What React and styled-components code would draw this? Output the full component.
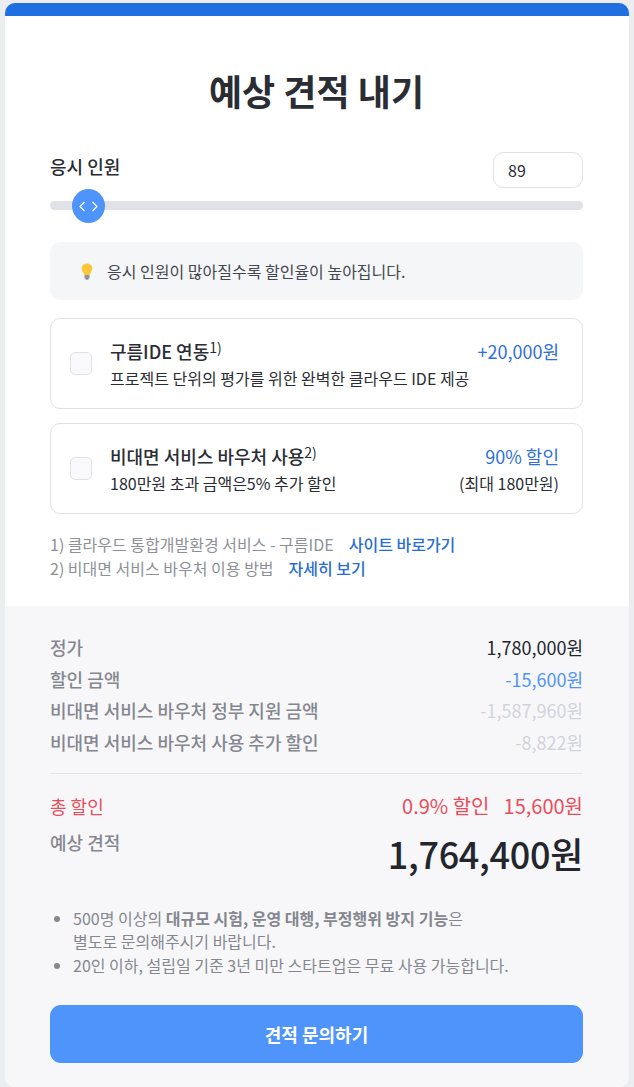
import styled, { createGlobalStyle } from "styled-components";

const GlobalStyle = createGlobalStyle`
  html, body {
    margin: 0;
    padding: 0;
    background: #ecedf1;
  }
  * {
    box-sizing: border-box;
  }
  body {
    font-family: "Noto Sans CJK KR", "Noto Sans", sans-serif;
    color: #2a2d34;
  }
`;

const headcount = 89;
const thumbLeft = 22;

const Card = styled.div`
  margin: 3px 5px 0;
  height: 1084px;
  background: #fff;
  border-top: 13px solid #1f6fe0;
  border-radius: 10px;
  overflow: hidden;
  display: flex;
  flex-direction: column;
`;

const Top = styled.div`
  padding: 48px 46px 0 45px;
  height: 590px;
`;

const Title = styled.h1`
  margin: 0;
  height: 52px;
  text-align: center;
  font-size: 36px;
  line-height: 52px;
  font-weight: 700;
  color: #2a2d34;
`;

const LabelRow = styled.div`
  margin-top: 36px;
  display: flex;
  justify-content: space-between;
  align-items: flex-start;
`;

const Label = styled.div`
  font-size: 18px;
  line-height: 28px;
  font-weight: 500;
  color: #2a2d34;
`;

const CountInput = styled.input`
  width: 90px;
  height: 36px;
  padding: 0 14px;
  border: 1px solid #e1e1e8;
  border-radius: 10px;
  font-family: inherit;
  font-size: 16px;
  color: #2a2d34;
  outline: none;
`;

const Track = styled.div`
  position: relative;
  margin-top: 13px;
  height: 9px;
  border-radius: 5px;
  background: #e1e1e8;
`;

const Thumb = styled.div`
  position: absolute;
  top: -12px;
  width: 33px;
  height: 34px;
  border-radius: 50%;
  background: #4e94fb;
  display: flex;
  align-items: center;
  justify-content: center;
`;

const Tip = styled.div`
  margin-top: 32px;
  height: 58px;
  padding: 0 30px;
  background: #f5f6f8;
  border-radius: 10px;
  display: flex;
  align-items: center;
  gap: 13px;
  font-size: 16px;
  color: #44474f;
`;

const Options = styled.div`
  margin-top: 18px;
  display: flex;
  flex-direction: column;
  gap: 14px;
`;

const Option = styled.div`
  height: 91px;
  padding: 0 23px 0 19px;
  border: 1px solid #e1e1e8;
  border-radius: 10px;
  display: flex;
  align-items: center;
`;

const Check = styled.span`
  flex: none;
  width: 22px;
  height: 23px;
  margin-right: 18px;
  border: 1px solid #e1e1e8;
  border-radius: 5px;
  background: #f9f9fb;
`;

const OptionBody = styled.div`
  flex: 1;
  min-width: 0;
`;

const OptionTitle = styled.div`
  font-size: 18px;
  line-height: 26px;
  font-weight: 500;
  color: #2a2d34;
  sup {
    font-size: 14px;
    font-weight: 400;
    line-height: 0;
    vertical-align: 6px;
  }
`;

const OptionText = styled.div`
  margin-top: 2px;
  font-size: 16px;
  line-height: 24px;
  color: #2a2d34;
`;

const OptionPrices = styled.div`
  text-align: right;
  align-self: center;
`;

const OptionPrice = styled.div`
  font-size: 18px;
  line-height: 26px;
  color: #2f6fd6;
`;

const Notes = styled.div`
  margin-top: 18px;
  font-size: 16px;
  line-height: 24px;
  color: #8e9098;
`;

const NoteLink = styled.a`
  margin-left: 15px;
  font-weight: 500;
  color: #2a6fd0;
`;

const Summary = styled.div`
  flex: 1;
  background: #f7f7fa;
  padding: 25px 46px 0 45px;
`;

const PriceRow = styled.div`
  height: 31.7px;
  display: flex;
  justify-content: space-between;
  align-items: center;
  font-size: 18px;
  font-weight: 500;
  color: #85878f;
`;

const PriceValue = styled.span`
  font-weight: 400;
  color: ${(props) => props.$color};
`;

const Divider = styled.hr`
  margin: 15px 0 0;
  border: 0;
  border-top: 1px solid #e4e4ea;
`;

const DiscountRow = styled.div`
  margin-top: 19px;
  display: flex;
  justify-content: space-between;
  font-size: 18px;
  line-height: 26px;
  color: #ea4d59;
`;

const DiscountValue = styled.span`
  font-size: 20px;
  span {
    margin-left: 14px;
  }
`;

const TotalRow = styled.div`
  margin-top: 7px;
  display: flex;
  justify-content: space-between;
  align-items: flex-start;
`;

const TotalLabel = styled.span`
  margin-top: 3px;
  font-size: 18px;
  line-height: 26px;
  font-weight: 500;
  color: #85878f;
`;

const TotalValue = styled.span`
  font-size: 36px;
  line-height: 54px;
  font-weight: 500;
  letter-spacing: -0.3px;
  color: #23262c;
`;

const Bullets = styled.ul`
  margin: 27px 0 0;
  padding: 0 0 0 23px;
  font-size: 16px;
  line-height: 23.5px;
  color: #85878f;
  b {
    font-weight: 700;
  }
`;

const Submit = styled.button`
  display: block;
  width: 100%;
  height: 58px;
  margin-top: 28px;
  border: 0;
  border-radius: 11px;
  background: #4e94fb;
  color: #fff;
  font-family: inherit;
  font-size: 18px;
  font-weight: 700;
`;

const Bulb = () => (
  <svg width="14" height="17" viewBox="0 0 14 17">
    <path
      d="M7 0.5C3.7 0.5 1.6 2.9 1.6 5.6c0 2.6 2 3.6 2.6 6.4h5.6c.6-2.8 2.6-3.8 2.6-6.4C12.4 2.9 10.3 .5 7 .5z"
      fill="#fcc83a"
    />
    <rect x="4.4" y="12" width="5.2" height="3.6" rx="1" fill="#8f949b" />
    <rect x="5.4" y="15.2" width="3.2" height="1.4" rx="0.7" fill="#6d7178" />
  </svg>
);

const Arrows = () => (
  <svg width="19" height="11" viewBox="0 0 19 11" fill="none" stroke="#fff" strokeWidth="1.2">
    <path d="M5.5 1L1 5.5 5.5 10" />
    <path d="M13.5 1L18 5.5 13.5 10" />
  </svg>
);

const App = () => {
  return (
    <>
      <GlobalStyle />
      <Card>
        <Top>
          <Title>예상 견적 내기</Title>
          <LabelRow>
            <Label>응시 인원</Label>
            <CountInput type="text" defaultValue={headcount} />
          </LabelRow>
          <Track>
            <Thumb style={{ left: thumbLeft }}>
              <Arrows />
            </Thumb>
          </Track>
          <Tip>
            <Bulb />
            응시 인원이 많아질수록 할인율이 높아집니다.
          </Tip>
          <Options>
            <Option>
              <Check />
              <OptionBody>
                <OptionTitle>
                  구름IDE 연동<sup>1)</sup>
                </OptionTitle>
                <OptionText>프로젝트 단위의 평가를 위한 완벽한 클라우드 IDE 제공</OptionText>
              </OptionBody>
              <OptionPrices>
                <OptionPrice>+20,000원</OptionPrice>
                <OptionText>&nbsp;</OptionText>
              </OptionPrices>
            </Option>
            <Option>
              <Check />
              <OptionBody>
                <OptionTitle>
                  비대면 서비스 바우처 사용<sup>2)</sup>
                </OptionTitle>
                <OptionText>180만원 초과 금액은5% 추가 할인</OptionText>
              </OptionBody>
              <OptionPrices>
                <OptionPrice>90% 할인</OptionPrice>
                <OptionText>(최대 180만원)</OptionText>
              </OptionPrices>
            </Option>
          </Options>
          <Notes>
            <div>
              1) 클라우드 통합개발환경 서비스 - 구름IDE<NoteLink>사이트 바로가기</NoteLink>
            </div>
            <div>
              2) 비대면 서비스 바우처 이용 방법<NoteLink>자세히 보기</NoteLink>
            </div>
          </Notes>
        </Top>
        <Summary>
          <PriceRow>
            정가<PriceValue $color="#23262c">1,780,000원</PriceValue>
          </PriceRow>
          <PriceRow>
            할인 금액<PriceValue $color="#4e94fb">-15,600원</PriceValue>
          </PriceRow>
          <PriceRow>
            비대면 서비스 바우처 정부 지원 금액<PriceValue $color="#d2d3da">-1,587,960원</PriceValue>
          </PriceRow>
          <PriceRow>
            비대면 서비스 바우처 사용 추가 할인<PriceValue $color="#d2d3da">-8,822원</PriceValue>
          </PriceRow>
          <Divider />
          <DiscountRow>
            총 할인
            <DiscountValue>
              0.9% 할인<span>15,600원</span>
            </DiscountValue>
          </DiscountRow>
          <TotalRow>
            <TotalLabel>예상 견적</TotalLabel>
            <TotalValue>1,764,400원</TotalValue>
          </TotalRow>
          <Bullets>
            <li>
              500명 이상의 <b>대규모 시험, 운영 대행, 부정행위 방지 기능</b>은
              <br />
              별도로 문의해주시기 바랍니다.
            </li>
            <li>20인 이하, 설립일 기준 3년 미만 스타트업은 무료 사용 가능합니다.</li>
          </Bullets>
          <Submit>견적 문의하기</Submit>
        </Summary>
      </Card>
    </>
  );
};

export default App;
